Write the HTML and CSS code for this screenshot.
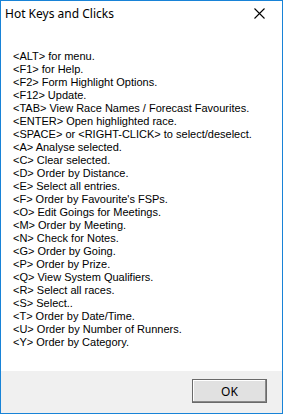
FILE: index.html
```html
<!DOCTYPE html>
<html lang="en">
<head>
    <meta charset="UTF-8">
    <title>Hot Keys and Clicks</title>
    <link rel="stylesheet" href="styles.css">
</head>
<body>
    <div class="window">
        <!-- Title bar -->
        <div class="titlebar">
            <span class="title">Hot Keys and Clicks</span>
            <span class="close">
                <svg width="11" height="11" viewBox="0 0 11 11">
                    <path d="M0.5 0.5 L10.5 10.5 M10.5 0.5 L0.5 10.5" stroke="#000" stroke-width="1.1" fill="none"/>
                </svg>
            </span>
        </div>

        <!-- Hot key list -->
        <div class="content">
            <div>&lt;ALT&gt; for menu.</div>
            <div>&lt;F1&gt; for Help.</div>
            <div>&lt;F2&gt; Form Highlight Options.</div>
            <div>&lt;F12&gt; Update.</div>
            <div>&lt;TAB&gt; View Race Names / Forecast Favourites.</div>
            <div>&lt;ENTER&gt; Open highlighted race.</div>
            <div>&lt;SPACE&gt; or &lt;RIGHT-CLICK&gt; to select/deselect.</div>
            <div>&lt;A&gt; Analyse selected.</div>
            <div>&lt;C&gt; Clear selected.</div>
            <div>&lt;D&gt; Order by Distance.</div>
            <div>&lt;E&gt; Select all entries.</div>
            <div>&lt;F&gt; Order by Favourite's FSPs.</div>
            <div>&lt;O&gt; Edit Goings for Meetings.</div>
            <div>&lt;M&gt; Order by Meeting.</div>
            <div>&lt;N&gt; Check for Notes.</div>
            <div>&lt;G&gt; Order by Going.</div>
            <div>&lt;P&gt; Order by Prize.</div>
            <div>&lt;Q&gt; View System Qualifiers.</div>
            <div>&lt;R&gt; Select all races.</div>
            <div>&lt;S&gt; Select..</div>
            <div>&lt;T&gt; Order by Date/Time.</div>
            <div>&lt;U&gt; Order by Number of Runners.</div>
            <div>&lt;Y&gt; Order by Category.</div>
        </div>

        <!-- Button bar -->
        <div class="footer">
            <button class="ok">OK</button>
        </div>
    </div>
</body>
</html>
```

FILE: styles.css
```css
body {
    margin: 0;
    padding: 0;
    font-family: "Liberation Sans", Arial, sans-serif;
    background: #fff;
}

.window {
    width: 283px;
    height: 414px;
    box-sizing: border-box;
    border: 1px solid #1883d7;
    display: flex;
    flex-direction: column;
    background: #fff;
}

.titlebar {
    height: 29px;
    display: flex;
    align-items: center;
    justify-content: space-between;
    padding: 0 0 0 4px;
}

.title {
    font-family: "Noto Sans", sans-serif;
    font-size: 12px;
    color: #000;
    margin-top: -4px;
}

.close {
    width: 46px;
    display: flex;
    justify-content: center;
    margin-top: -4px;
}

.close svg {
    display: block;
}

/* List of keys */
.content {
    flex: 1;
    padding: 20px 0 0 12px;
    font-size: 11px;
    line-height: 13px;
    color: #000;
}

.footer {
    height: 42px;
    background: #f0f0f0;
    display: flex;
    align-items: center;
    justify-content: flex-end;
    padding-right: 15px;
}

.ok {
    width: 75px;
    height: 24px;
    margin-top: -2px;
    background: #e1e1e1;
    border: 1px solid #6a6a6a;
    box-shadow: inset -1px -1px 0 #8a8a8a, inset 1px 1px 0 #fff;
    font-family: "Noto Sans", sans-serif;
    font-size: 12px;
    color: #000;
    padding: 0;
}
```
